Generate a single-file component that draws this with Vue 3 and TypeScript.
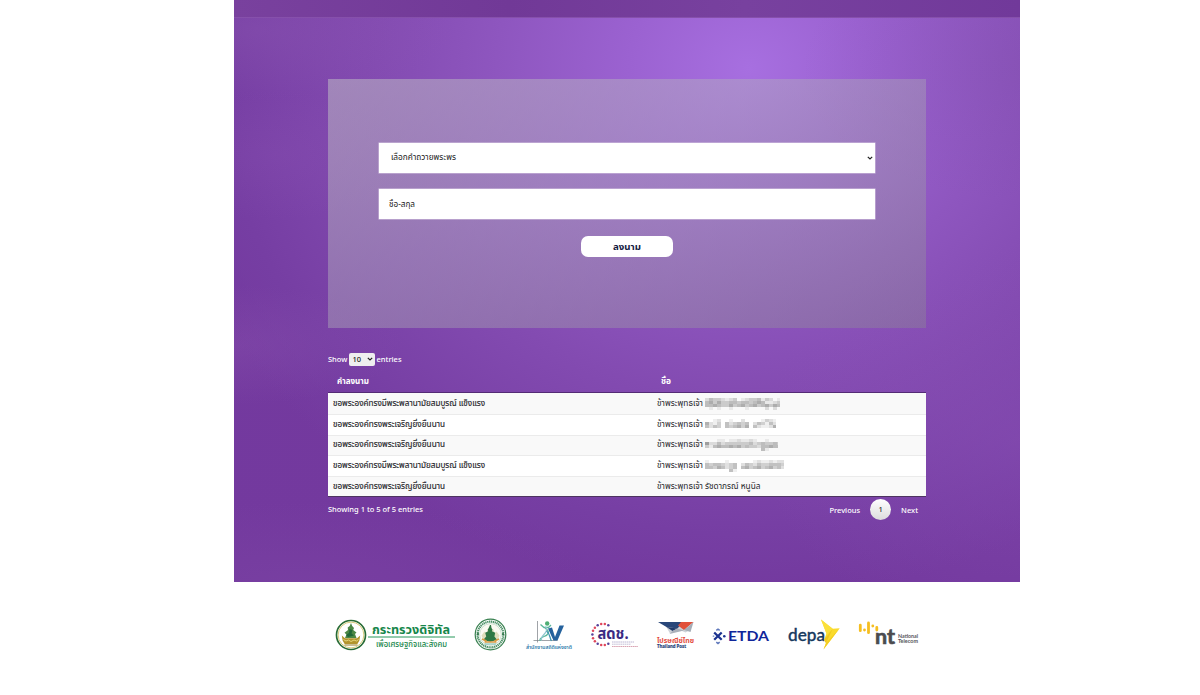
<script setup lang="ts">
interface Mosaic {
  width: number
  rows: string[]
}

interface Entry {
  wish: string
  long: boolean
  name: string
  mosaic?: Mosaic
}

const prefix = 'ข้าพระพุทธเจ้า'
const longWish = 'ขอพระองค์ทรงมีพระพลานามัยสมบูรณ์ แข็งแรง'
const shortWish = 'ขอพระองค์ทรงพระเจริญยิ่งยืนนาน'

/* Each character is the darkness (0-9) of one mosaic cell. */
const entries: Entry[] = [
  { wish: longWish, long: true, name: '', mosaic: { width: 75, rows: ['2433212301233413201', '4535334434434541123', '4454335345345345354', '0101001000100002020'] } },
  { wish: shortWish, long: false, name: '', mosaic: { width: 71, rows: ['001200100200001321', '521304234340243142', '424304345350421125', '000000000000000000'] } },
  { wish: shortWish, long: false, name: '', mosaic: { width: 73, rows: ['0001101121121001000', '6224233333342343343', '3145445453433244544', '0000000000000041000'] } },
  { wish: longWish, long: true, name: '', mosaic: { width: 79, rows: ['10000100000012112122', '43443234024324334443', '44354234045345345342', '00000041000000000000'] } },
  { wish: shortWish, long: false, name: 'รัชดาภรณ์ หนูนิล' },
]

const cells = (m: Mosaic) =>
  m.rows.flatMap((row, y) => [...row].map((v, x) => ({ x: x * 4, y: y * 3, o: Number(v) / 13 })))

const ring = (n: number, cx: number, cy: number, r: number) =>
  Array.from({ length: n }, (_, i) => {
    const a = (i / n) * Math.PI * 2
    return { x: cx + r * Math.cos(a), y: cy + r * Math.sin(a), i }
  })

const dots = ring(18, 12, 12.5, 10.6).filter((d) => d.x < 20 || d.y < 5)
</script>

<template>
  <div class="page">
    <main class="hero">
      <div class="strip"></div>
      <section class="content">
        <form class="card" @submit.prevent>
          <div class="field select">
            <svg class="t-select" width="65" height="16"><text x="0" y="10" textLength="65" lengthAdjust="spacingAndGlyphs">เลือกคำถวายพระพร</text></svg>
            <svg class="caret" width="6" height="4" viewBox="0 0 6 4"><path d="M.8.8 3 3 5.200.8" /></svg>
          </div>
          <div class="field input">
            <svg width="27" height="16"><text x="0" y="10.500" textLength="26" lengthAdjust="spacingAndGlyphs">ชื่อ-สกุล</text></svg>
          </div>
          <button class="submit" type="button">
            <svg width="28" height="16"><text x="0" y="10.700" textLength="28" lengthAdjust="spacingAndGlyphs">ลงนาม</text></svg>
          </button>
        </form>

        <div class="length">
          <span class="show">Show</span>
          <span class="picker">10<svg class="caret" width="6" height="4" viewBox="0 0 6 4"><path d="M.8.8 3 3 5.200.8" /></svg></span>
          <span>entries</span>
        </div>

        <div class="table">
          <div class="row head">
            <div><svg width="34" height="16"><text x="0" y="10" textLength="32" lengthAdjust="spacingAndGlyphs">คำลงนาม</text></svg></div>
            <div><svg width="12" height="16"><text x="0" y="10" textLength="10" lengthAdjust="spacingAndGlyphs">ชื่อ</text></svg></div>
          </div>
          <div v-for="(e, i) in entries" :key="i" class="row body">
            <div class="wish">
              <svg width="154" height="18"><text x="0" y="11" :textLength="e.long ? 152 : 112" lengthAdjust="spacingAndGlyphs">{{ e.wish }}</text></svg>
            </div>
            <div class="name">
              <svg width="48" height="18"><text x="0" y="11" textLength="46" lengthAdjust="spacingAndGlyphs">{{ prefix }}</text></svg>
              <svg v-if="e.mosaic" class="mosaic" :width="e.mosaic.width" height="12">
                <rect v-for="(c, k) in cells(e.mosaic)" :key="k" :x="c.x" :y="c.y" width="4" height="3" :fill-opacity="c.o" />
              </svg>
              <svg v-else width="58" height="18"><text x="0" y="11" textLength="55.500" lengthAdjust="spacingAndGlyphs">{{ e.name }}</text></svg>
            </div>
          </div>
        </div>

        <div class="foot">
          <span class="info">Showing 1 to 5 of 5 entries</span>
          <nav class="pager">
            <span>Previous</span>
            <span class="current">1</span>
            <span>Next</span>
          </nav>
        </div>
      </section>
    </main>

    <footer class="logos">
      <svg class="logo l1" width="122" height="36" viewBox="0 0 122 36">
        <circle cx="16" cy="18" r="14.500" fill="#fff" stroke="#286b35" stroke-width="1.700" />
        <circle cx="16" cy="18" r="12.900" fill="none" stroke="#d3c56d" stroke-width=".9" />
        <path d="M16 6l1.200 3 1.800 2-.8 2 3.300 2.500-1.500 1.500 1.500 4H10l1.500-3.500-2-1.800 3.500-2.700-.3-2.500 2-1.500z" fill="#4b8745" />
        <path d="M14.500 12l3 1-1 3.500 2.500 2-6 1.500-2-2 3-2z" fill="#1f6638" />
        <path d="M6.800 18.500l3.200 2.700h12l3.200-2.700-.8 5-2 3.500H9.600l-2-3.500z" fill="#b2942d" />
        <path d="M8.500 22.500l2.500 1.500 2.500-1 2.500 1.500 3-1.500 2.500 1 2-1.500" fill="none" stroke="#eadc80" stroke-width=".9" />
        <path d="M9.500 28h13" stroke="#927b24" />
        <text x="37" y="17" textLength="78" lengthAdjust="spacingAndGlyphs" class="green bold" font-size="12.500">กระทรวงดิจิทัล</text>
        <path d="M33 20h87" stroke="#26985b" stroke-width="1" />
        <text x="41" y="29.500" textLength="71" lengthAdjust="spacingAndGlyphs" class="green" font-size="8">เพื่อเศรษฐกิจและสังคม</text>
      </svg>

      <svg class="logo l2" width="34" height="34" viewBox="0 0 34 34">
        <circle cx="17.500" cy="17.500" r="15.300" fill="#fff" stroke="#3a8151" stroke-width="1.200" />
        <circle cx="17.500" cy="17.500" r="12.900" fill="none" stroke="#4b9065" stroke-width="2.200" stroke-dasharray="1.300 .6" />
        <circle cx="17.500" cy="17.500" r="10.900" fill="#fbfaf2" stroke="#9cc3a8" stroke-width=".5" />
        <g transform="translate(.5 .5)">
          <path d="M8 18l3-4 2 2 1-4 6 0 1 4 2-2 3 4-2 5H10z" fill="#c8c78f" opacity=".55" />
          <path d="M16.500 7.500h1l.5 3 1 1.500-.6 1.800 3.300 1.500-.8 3.700 2.800 3.500-7 1.800-7-1.800 3-3.500-1-3.700 3-1.500-.5-1.800 1-1.500z" fill="#2f7843" />
          <path d="M8.500 21.500l4.500 2M25.500 21.500l-4.500 2M11 24.500h12" stroke="#d99b43" stroke-width="1.500" />
          <path d="M11.500 26.500h11" stroke="#72b9b1" stroke-width="1" />
          <path d="M3.500 16.500h2M28.500 16.500h2" stroke="#286c42" stroke-width="1.500" />
        </g>
      </svg>

      <svg class="logo l3" width="48" height="34" viewBox="0 0 48 34">
        <path d="M12.500 3v21.500M8.500 22.500h24" stroke="#777b82" stroke-width=".7" fill="none" />
        <circle cx="22.200" cy="5.500" r="2.200" fill="#4eae74" />
        <path d="M15.500 6.500l3.500 3h4.500l2.500-2.500M20 10c6 4 3 7-1 8.500s-4.200 2.500-4 4.500" stroke="#5bb79b" stroke-width="1.300" fill="none" />
        <path d="M20.500 8.500c2.500 3 1 5.500-2 8.500-2.200 2.200-2.700 3-2 5.500" stroke="#8fc6cf" stroke-width="1.200" fill="none" />
        <path d="M23 10.500l4-1 3 9.500 4.500-11.500h4.500L32.500 22.500h-4z" fill="#25629d" />
        <path d="M21.500 13c4 3 3 7 5 10" stroke="#4396b2" stroke-width="1.300" fill="none" />
        <text x="1" y="30.500" textLength="46" lengthAdjust="spacingAndGlyphs" fill="#2b79aa" font-size="5.500" font-weight="600">สำนักงานสถิติแห่งชาติ</text>
      </svg>

      <svg class="logo l4" width="50" height="28" viewBox="0 0 50 28">
        <circle v-for="d in dots" :key="d.i" :cx="d.x" :cy="d.y" r="1.250" :fill="d.i % 3 ? '#e0465b' : '#57429a'" />
        <text x="6.500" y="16.500" textLength="31" lengthAdjust="spacingAndGlyphs" fill="#3b2a83" font-size="16" font-weight="700">สดช.</text>
        <g fill="none" stroke-width=".9" stroke-dasharray="1.600 .5">
          <path d="M21 20h22" stroke="#b3aecf" /><path d="M21 22.200h19" stroke="#bdb8d3" /><path d="M21 24.500h26" stroke="#d59aaa" />
        </g>
      </svg>

      <svg class="logo l5" width="40" height="32" viewBox="0 0 40 32">
        <path d="M9 7.500l12-1.500L34 10.500l-5.500 3-7-3-8.500 4z" fill="#cfd3d9" />
        <path d="M1 3h25l-5.500 6.500L9.500 8z" fill="#294779" />
        <path d="M21 6.500l3-3.500h12.500l-9.500 8z" fill="#e0503a" />
        <path d="M9.500 8l11 1.500-5 2.500z" fill="#203a69" />
        <path d="M36.500 3l-3 10-6.500-2z" fill="#a5adb7" />
        <path d="M12.500 15l3-3 5-2.500 6.500 2z" fill="#aab0b9" />
        <text x="0" y="23.700" textLength="37" lengthAdjust="spacingAndGlyphs" fill="#e34c3d" font-size="7.400" font-weight="700">ไปรษณีย์ไทย</text>
        <text x="0" y="29" textLength="29" lengthAdjust="spacingAndGlyphs" fill="#26427a" stroke="#26427a" stroke-width=".15" font-size="4.900" font-weight="700">Thailand Post</text>
      </svg>

      <svg class="logo l6" width="58" height="18" viewBox="0 0 58 18">
        <path d="M2.200 5.500L9.700 12.800M9.700 5.500L2.200 12.800" fill="none" stroke="#1b3390" stroke-width="2.300" />
        <path d="M4.300 3.400L6 2.200l1.700 1.200M4.300 15.200L6 16.400l1.700-1.200" fill="none" stroke="#5f78bb" stroke-width="1.600" />
        <circle cx="1.500" cy="9.200" r=".9" fill="#8da2d0" />
        <circle cx="12.300" cy="9.200" r="1.300" fill="#1b3390" />
        <text x="16" y="13.500" textLength="41" lengthAdjust="spacingAndGlyphs" class="latin" fill="#10269a" font-size="12.300" font-weight="700">ETDA</text>
      </svg>

      <svg class="logo l7" width="54" height="32" viewBox="0 0 54 32">
        <text x="0" y="21" textLength="37" lengthAdjust="spacingAndGlyphs" class="latin" fill="#17395e" stroke="#17395e" stroke-width=".35" font-size="17.500">depa</text>
        <path d="M33-.5l11.700 9.200 7-.4-16.200 21.200 2.500-6.500-2-3 2.500-6.500z" fill="#fadb2c" />
        <path d="M44.700 8.700L36 20l2 3z" fill="#f0c822" />
        <path d="M51.700 8.300L38 23l-2.500 6.500z" fill="#f3cd20" />
        <path d="M33-.5l11.700 9.200-6 5.500z" fill="#fbe03a" />
      </svg>

      <svg class="logo l8" width="62" height="28" viewBox="0 0 62 28">
        <g stroke="#f5be20" stroke-width="2.800" stroke-linecap="round">
          <path d="M2.300 5.200v5.500M6.500 9.900v.1M10.500 3v9.700M14.800 6v.1M18.800 7.500v2.500" />
        </g>
        <text x="17" y="24" textLength="20" lengthAdjust="spacingAndGlyphs" class="latin" fill="#4b4b4f" stroke="#4b4b4f" stroke-width=".6" font-size="20" font-weight="700">nt</text>
        <text x="40" y="18" textLength="20" lengthAdjust="spacingAndGlyphs" class="latin" fill="#56565a" font-size="4.700" font-weight="700">National</text>
        <text x="40" y="23" textLength="20" lengthAdjust="spacingAndGlyphs" class="latin" fill="#56565a" font-size="4.700" font-weight="700">Telecom</text>
      </svg>
    </footer>
  </div>
</template>

<style>
body {
  margin: 0;
  background: #fff;
}
</style>

<style scoped>
.page {
  width: 1200px;
  height: 695px;
  overflow: hidden;
  background: #fff;
  font-family: "Noto Sans", "Noto Sans Thai", "Prompt", "Kanit", sans-serif;
  font-size: 7.5px;
  font-weight: 500;
  color: #fff;
}
svg {
  display: block;
  overflow: visible;
  flex: none;
}
.hero {
  width: 786px;
  height: 582px;
  margin-left: 234px;
  background:
    radial-gradient(ellipse 170px 60px at 0 345px, rgba(145, 90, 180, .28), transparent),
    radial-gradient(ellipse 150px 65px at 40px 155px, rgba(142, 85, 180, .22), transparent),
    radial-gradient(ellipse 200px 70px at 20px 30px, rgba(145, 92, 180, .3), transparent),
    radial-gradient(ellipse 220px 130px at 786px 70px, rgba(120, 75, 160, .22), transparent),
    radial-gradient(ellipse 260px 200px at 786px 440px, rgba(140, 82, 184, .4), transparent),
    radial-gradient(ellipse 300px 80px at 60px 582px, rgba(130, 76, 168, .3), transparent),
    radial-gradient(ellipse 600px 530px at 515px 68px, #a76fe0 0, #9b62d1 20%, #8e56bf 42%, #834bb1 62%, #763ea3 88%, rgba(115, 57, 157, 0) 100%),
    linear-gradient(180deg, #743aa0, #73399e);
}
.strip {
  box-sizing: border-box;
  height: 18px;
  background: linear-gradient(90deg, #79419e, #713997 35%, #78419f 65%, #71399a);
  border-bottom: 1px solid #8650ab;
}
.content {
  width: 598px;
  margin: 0 0 0 94px;
  padding-top: 61px;
}
.card {
  box-sizing: border-box;
  height: 249px;
  padding: 64px 51px 0;
  display: flex;
  flex-direction: column;
  align-items: center;
  background: linear-gradient(155deg, rgba(188, 184, 196, .56) 0, rgba(176, 172, 188, .46) 40%, rgba(140, 135, 148, .42) 100%);
}
.field {
  box-sizing: border-box;
  width: 496px;
  height: 30px;
  flex: none;
  display: flex;
  align-items: center;
  justify-content: space-between;
  background: #fff;
  fill: #222;
  box-shadow: 0 0 0 .5px #d5c5e1;
  font-size: 8px;
  font-weight: 400;
}
.select {
  padding: 0 2px 0 12px;
}
.input {
  margin-top: 16px;
  padding-left: 10px;
}
.caret path {
  fill: none;
  stroke: #222;
  stroke-width: 1.2;
}
.submit {
  width: 92px;
  height: 21px;
  margin-top: 17px;
  padding: 0;
  display: flex;
  align-items: center;
  justify-content: center;
  border: 0;
  border-radius: 7px;
  background: #fff;
  fill: #14203f;
  font: 700 9px "Noto Sans", "Noto Sans Thai", sans-serif;
}
.length {
  height: 14px;
  margin-top: 24px;
  display: flex;
  align-items: center;
  line-height: 14px;
}
.show {
  width: 20.5px;
}
.picker {
  box-sizing: border-box;
  width: 26px;
  height: 13px;
  margin-right: 2px;
  padding: 0 2px 0 4px;
  display: flex;
  align-items: center;
  justify-content: space-between;
  border-radius: 2px;
  background: #efefef;
  color: #222;
}
.table {
  margin-top: 5px;
}
.row {
  display: grid;
  grid-template-columns: 324px 1fr;
  align-items: center;
  box-sizing: border-box;
}
.head {
  height: 22px;
  border-bottom: 1px solid #542b75;
  fill: #fff;
  font-weight: 700;
  font-size: 8px;
}
.head > div {
  padding-left: 9px;
}
.body {
  height: 20.8px;
  background: #fff;
  border-top: 1px solid #ebebeb;
  fill: #26262a;
  font-size: 8px;
  font-weight: 400;
}
.body:nth-child(even) {
  background: #f9f9f9;
}
.body:nth-child(2) {
  border-top-color: #f9f9f9;
}
.body:last-child {
  border-bottom: 1px solid #4d3460;
}
.wish {
  padding-left: 5px;
  stroke: #26262a;
  stroke-width: .15;
}
.name {
  padding-left: 5px;
  display: flex;
  align-items: center;
}
.mosaic {
  fill: #333;
  overflow: hidden;
}
.foot {
  margin-top: 2px;
  height: 22px;
  display: flex;
  justify-content: space-between;
  align-items: center;
}
.info {
  margin-top: -1px;
}
.pager {
  display: flex;
  align-items: center;
  padding-right: 8px;
}
.current {
  width: 21px;
  height: 21px;
  margin: 0 10px;
  border-radius: 50%;
  background: linear-gradient(#fff, #dcdcdc);
  color: #333;
  line-height: 21px;
  text-align: center;
}
.logos {
  display: flex;
  align-items: flex-start;
  padding: 34px 0 0 335px;
  font-family: "Noto Sans", "Noto Sans Thai", sans-serif;
}
.green {
  fill: #16864a;
}
.bold {
  font-weight: 700;
}
.latin {
  font-family: Lato, "Noto Sans", sans-serif;
}
.l1 { margin-top: 1px; }
.l2 { margin: 1px 0 0 16px; }
.l3 { margin: 2px 0 0 18px; }
.l4 { margin: 6px 0 0 18px; }
.l5 { margin: 3px 0 0 16px; }
.l6 { margin: 11px 0 0 15px; }
.l7 { margin: 4px 0 0 18px; }
.l8 { margin: 4px 0 0 16px; }
</style>
